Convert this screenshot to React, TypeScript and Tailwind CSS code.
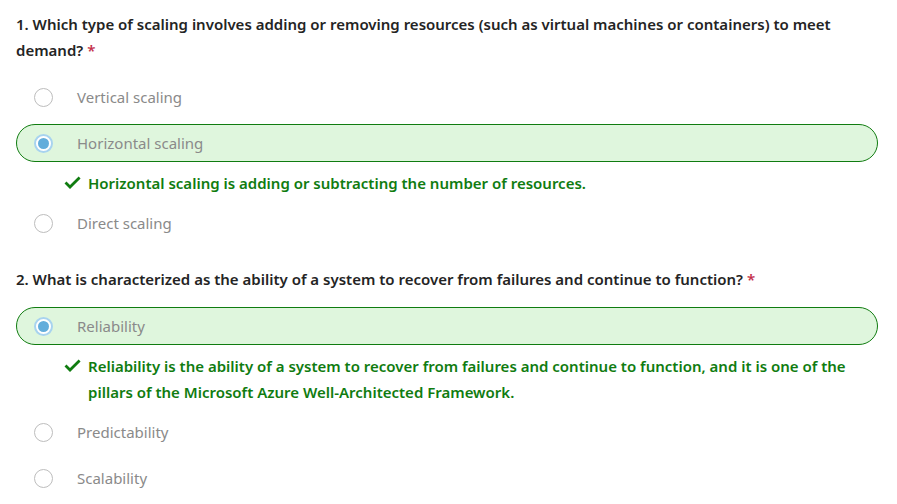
const font = { fontFamily: '"Segoe UI", "Noto Sans", sans-serif' };

type Option = { label: string; selected?: boolean; feedback?: string };
type Question = { n: number; text: string; options: Option[] };

const questions: Question[] = [
  {
    n: 1,
    text: "Which type of scaling involves adding or removing resources (such as virtual machines or containers) to meet demand?",
    options: [
      { label: "Vertical scaling" },
      { label: "Horizontal scaling", selected: true, feedback: "Horizontal scaling is adding or subtracting the number of resources." },
      { label: "Direct scaling" },
    ],
  },
  {
    n: 2,
    text: "What is characterized as the ability of a system to recover from failures and continue to function?",
    options: [
      {
        label: "Reliability",
        selected: true,
        feedback:
          "Reliability is the ability of a system to recover from failures and continue to function, and it is one of the pillars of the Microsoft Azure Well-Architected Framework.",
      },
      { label: "Predictability" },
      { label: "Scalability" },
    ],
  },
];

function Radio({ checked }: { checked?: boolean }) {
  if (checked)
    return (
      <span className="grid h-[19px] w-[19px] shrink-0 place-items-center rounded-full border-2 border-[#a8d3ef] bg-white">
        <span className="h-[11px] w-[11px] rounded-full bg-[#63addb]" />
      </span>
    );
  return <span className="h-[19px] w-[19px] shrink-0 rounded-full border border-[#bdbdbd] bg-white" />;
}

function Check() {
  return (
    <svg viewBox="0 0 17 13" className="mt-[6px] h-[13px] w-[17px] shrink-0">
      <path d="M1.5 6.6 L6 11 L15.6 1.6" fill="none" stroke="#107c10" strokeWidth="2.8" />
    </svg>
  );
}

function OptionRow({ opt }: { opt: Option }) {
  return (
    <div>
      <div
        className={
          opt.selected
            ? "flex h-[38px] items-center rounded-full border border-[#107c10] bg-[#dff6dd] pl-[17px]"
            : "flex h-[38px] items-center pl-[18px]"
        }
      >
        <Radio checked={opt.selected} />
        <span className="ml-[24px] text-[15px] text-[#8a8a8a]">{opt.label}</span>
      </div>
      {opt.feedback && (
        <div className="mt-[8px] flex gap-[7px] pl-[48px]">
          <Check />
          <p className="text-[15px] font-semibold leading-[26px] text-[#107c10]">{opt.feedback}</p>
        </div>
      )}
    </div>
  );
}

export default function App() {
  return (
    <div className="min-h-screen bg-white px-[16px] pr-[19px] pt-[11px]" style={font}>
      {questions.map((q) => (
        <section key={q.n} className="mb-[24px]">
          <h2 className="mb-[15px] text-[15px] font-semibold leading-[26px] text-[#242424]">
            {`${q.n}. ${q.text} `}
            <span className="text-[#c4314b]">*</span>
          </h2>
          <div className="flex flex-col gap-[8px]">
            {q.options.map((o) => (
              <OptionRow key={o.label} opt={o} />
            ))}
          </div>
        </section>
      ))}
    </div>
  );
}
